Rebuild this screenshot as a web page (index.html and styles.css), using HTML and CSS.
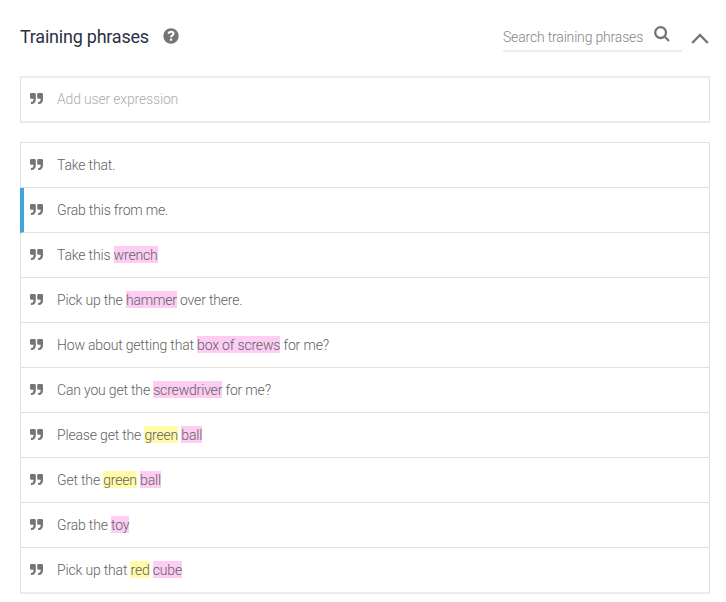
FILE: index.html
```html
<!DOCTYPE html>
<html lang="en">
<head>
<meta charset="utf-8">
<title>Training phrases</title>
<link rel="stylesheet" href="styles.css">
</head>
<body>
<svg class="defs" aria-hidden="true">
  <symbol id="quote" viewBox="0 0 13 11">
    <path d="M1.3 0H4.5Q5.8 0 5.8 1.3V6.2Q5.8 10.9 1.3 10.9H.9V8.9H1.3Q3.4 8.9 3.5 6.4V5.7H1.3Q0 5.7 0 4.4V1.3Q0 0 1.3 0Z"/>
    <path d="M8.5 0H11.7Q13 0 13 1.3V6.2Q13 10.9 8.5 10.9H8.1V8.9H8.5Q10.6 8.9 10.7 6.4V5.7H8.5Q7.2 5.7 7.2 4.4V1.3Q7.2 0 8.5 0Z"/>
  </symbol>
</svg>
<header class="header">
  <h1 class="title">Training phrases</h1>
  <svg class="help" viewBox="0 0 16 16"><circle cx="8" cy="8" r="7.7"/><path class="help-mark" d="M5.5 5.9C5.8 4.4 6.8 3.8 8.1 3.8C9.5 3.8 10.5 4.6 10.5 5.8C10.5 7.5 8 7.3 8 9.3"/><rect class="help-dot" x="6.9" y="10.6" width="2.2" height="2.1"/></svg>
  <div class="search">
    <span class="search-text">Search training phrases</span>
    <svg class="search-icon" viewBox="0 0 16 16"><circle cx="6.6" cy="6.6" r="5.4"/><path d="M10.5 10.5L15 15"/></svg>
  </div>
  <svg class="chevron" viewBox="0 0 18 11"><path d="M1.2 10L9 2L16.8 10"/></svg>
</header>
<div class="box">
  <div class="row placeholder"><svg class="quote"><use href="#quote"/></svg><span>Add user expression</span></div>
</div>
<main class="box list">
  <div class="row"><svg class="quote"><use href="#quote"/></svg><span>Take that.</span></div>
  <div class="row active"><svg class="quote"><use href="#quote"/></svg><span>Grab this from me.</span></div>
  <div class="row"><svg class="quote"><use href="#quote"/></svg><span>Take this <mark class="object">wrench</mark></span></div>
  <div class="row"><svg class="quote"><use href="#quote"/></svg><span>Pick up the <mark class="object">hammer</mark> over there.</span></div>
  <div class="row"><svg class="quote"><use href="#quote"/></svg><span>How about getting that <mark class="object">box of screws</mark> for me?</span></div>
  <div class="row"><svg class="quote"><use href="#quote"/></svg><span>Can you get the <mark class="object">screwdriver</mark> for me?</span></div>
  <div class="row"><svg class="quote"><use href="#quote"/></svg><span>Please get the <mark class="color">green</mark> <mark class="object">ball</mark></span></div>
  <div class="row"><svg class="quote"><use href="#quote"/></svg><span>Get the <mark class="color">green</mark> <mark class="object">ball</mark></span></div>
  <div class="row"><svg class="quote"><use href="#quote"/></svg><span>Grab the <mark class="object">toy</mark></span></div>
  <div class="row"><svg class="quote"><use href="#quote"/></svg><span>Pick up that <mark class="color">red</mark> <mark class="object">cube</mark></span></div>
</main>
</body>
</html>
```
FILE: styles.css
```css
* { box-sizing: border-box; }
body {
  margin: 0;
  padding: 0 17px 0 20px;
  height: 602px;
  overflow: hidden;
  background: #fff;
  color: #626262;
  font: 300 14px/18px Roboto, sans-serif;
  letter-spacing: -0.175px;
}
.defs { display: none; }
.header { display: flex; align-items: flex-start; height: 76px; }
.title {
  margin: 26px 0 0;
  color: #2b3044;
  font-size: 18px;
  font-weight: 400;
  line-height: 22px;
  letter-spacing: -0.23px;
}
.help { width: 16px; height: 16px; margin: 28px 0 0 14.4px; fill: #757575; }
.help-mark { fill: none; stroke: #fff; stroke-width: 2.1; }
.help-dot { fill: #fff; }
.search {
  display: flex;
  width: 179px;
  height: 30px;
  margin: 22px 9px 0 auto;
  border-bottom: 2px solid #ececec;
  color: #858585;
}
.search-text { padding-top: 6px; white-space: nowrap; }
.search-icon {
  width: 16px;
  height: 16px;
  margin: 4px 12px 0 auto;
  fill: none;
  stroke: #757575;
  stroke-width: 2.3;
}
.chevron { width: 18px; height: 11px; margin-top: 33px; fill: none; stroke: #757575; stroke-width: 2.4; }
.box { width: 690px; border: 1px solid #e0e0e0; }
.box:not(.list) { border-top: 2px solid #ececec; border-bottom: 2px solid #ececec; }
.list { margin-top: 19px; border-bottom: 2px solid #ececec; }
.row { display: flex; align-items: center; height: 45px; padding-left: 9px; border-bottom: 1px solid #e0e0e0; }
.row:last-child { height: 44px; border-bottom: 0; }
.row.placeholder { height: 43px; padding-bottom: 1px; color: #adadad; }
.active { margin-left: -1px; padding-left: 6px; border-left: 4px solid #42a5dc; }
.quote { flex: none; width: 13px; height: 11px; margin: -1px 14px 0 0; fill: #757575; }
mark { padding-top: 1px; color: inherit; }
.object { background: #fdcdf4; }
.color { background: #fffba8; }
```
